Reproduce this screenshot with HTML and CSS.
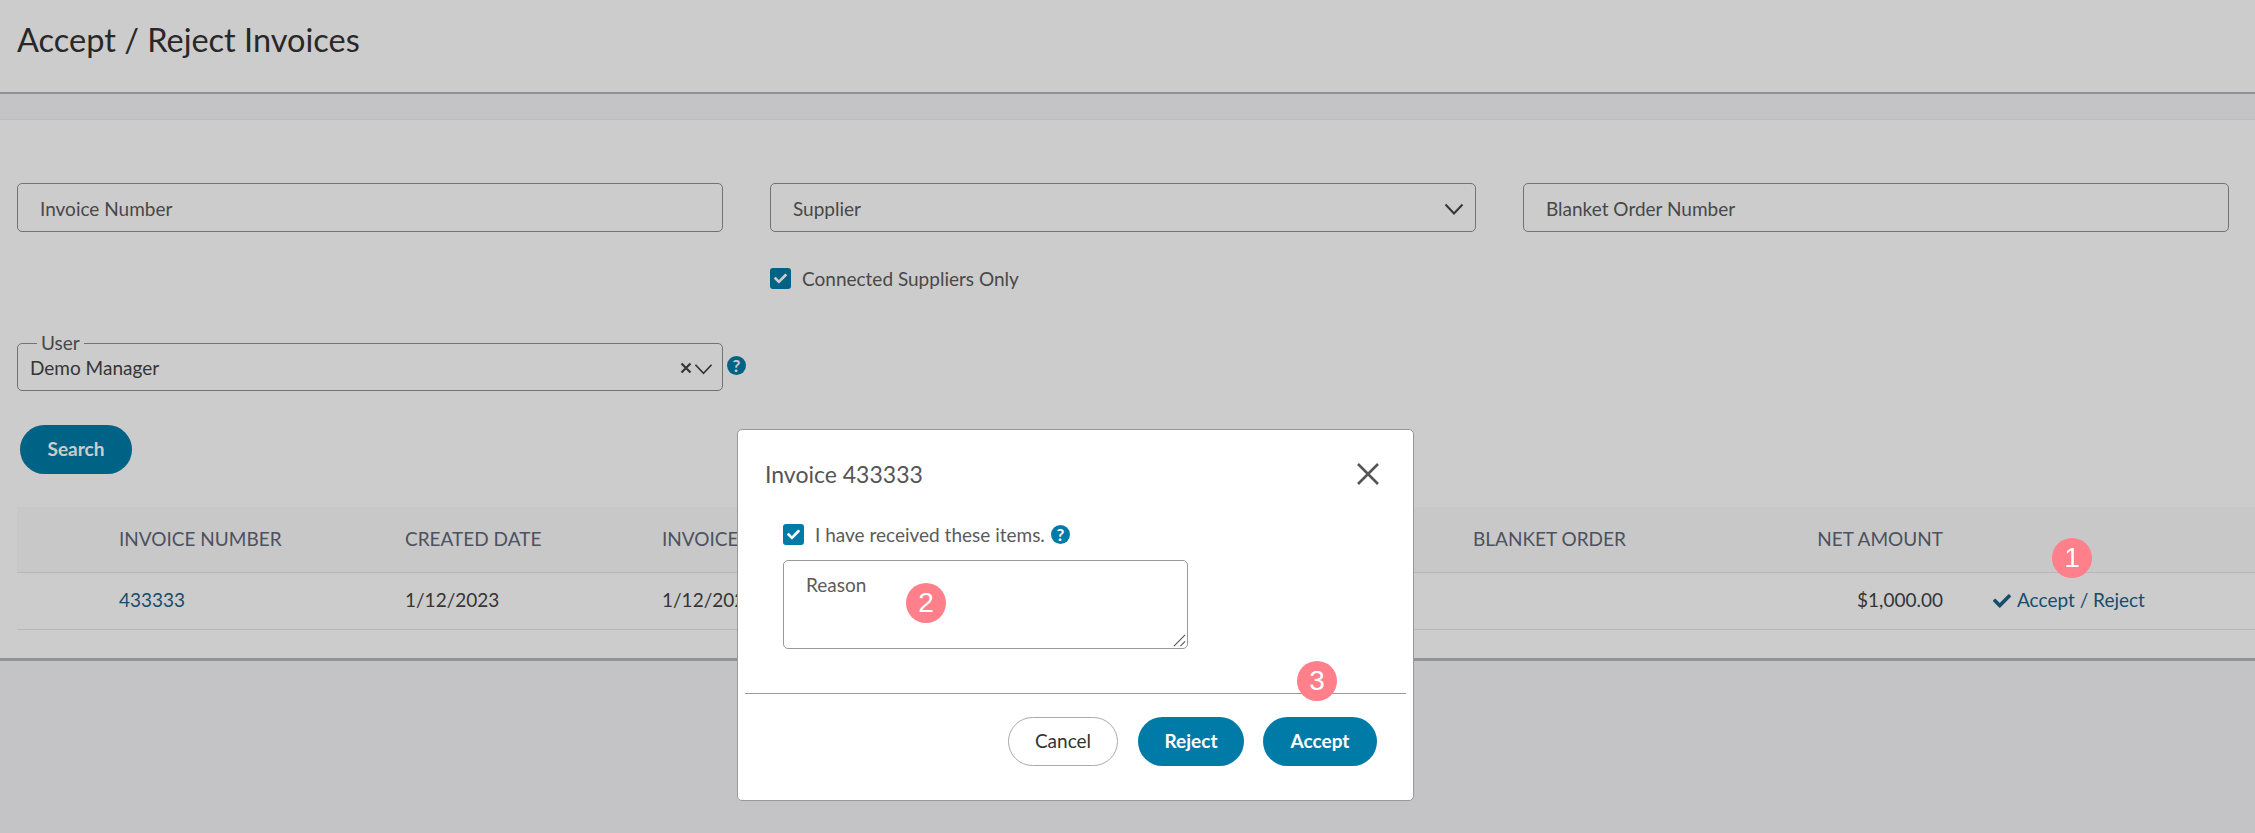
FILE: index.html
```html
<!DOCTYPE html>
<html lang="en">
<head>
<meta charset="utf-8">
<title>Accept / Reject Invoices</title>
<link rel="stylesheet" href="styles.css">
</head>
<body>
<header class="page-header"><h1>Accept / Reject Invoices</h1></header>
<div class="band"></div>
<main class="content">
  <div class="filters">
    <div class="field">Invoice Number</div>
    <div>
      <div class="field field-select">Supplier
        <svg class="chev" viewBox="0 0 20 12"><path d="M1.5 1.5 10 10.5 18.5 1.5"/></svg>
      </div>
      <label class="check-row connected">
        <span class="checkbox dark"><svg viewBox="0 0 512 512"><path d="M173.898 439.404l-166.4-166.4c-9.997-9.997-9.997-26.206 0-36.204l36.203-36.204c9.997-9.998 26.207-9.998 36.204 0L192 312.69 432.095 72.596c9.997-9.997 26.207-9.997 36.204 0l36.203 36.204c9.997 9.997 9.997 26.206 0 36.204l-294.4 294.401c-9.998 9.997-26.207 9.997-36.204-.001z"/></svg></span>
        Connected Suppliers Only
      </label>
    </div>
    <div class="field">Blanket Order Number</div>
  </div>
  <div class="user-row">
    <fieldset class="user-field">
      <legend>User</legend>
      <span class="user-value">Demo Manager</span>
      <svg class="user-x" viewBox="0 0 12 12"><path d="M1.5 1.5 10.5 10.5M10.5 1.5 1.5 10.5"/></svg>
      <svg class="user-chev" viewBox="0 0 20 12"><path d="M1.5 1.5 10 10.5 18.5 1.5"/></svg>
    </fieldset>
    <span class="help">?</span>
  </div>
  <button class="btn search" type="button">Search</button>
  <table class="grid">
    <colgroup><col class="c1"><col class="c2"><col class="c3"><col class="c4"><col class="c5"><col class="c6"><col class="c7"></colgroup>
    <thead>
      <tr><th></th><th>INVOICE NUMBER</th><th>CREATED DATE</th><th>INVOICE DATE</th><th>BLANKET ORDER</th><th class="num">NET AMOUNT</th><th></th></tr>
    </thead>
    <tbody>
      <tr><td></td><td><a class="link">433333</a></td><td>1/12/2023</td><td>1/12/2023</td><td></td><td class="num">$1,000.00</td>
      <td class="act"><a class="link"><svg class="act-check" viewBox="0 0 512 512"><path d="M173.898 439.404l-166.4-166.4c-9.997-9.997-9.997-26.206 0-36.204l36.203-36.204c9.997-9.998 26.207-9.998 36.204 0L192 312.69 432.095 72.596c9.997-9.997 26.207-9.997 36.204 0l36.203 36.204c9.997 9.997 9.997 26.206 0 36.204l-294.4 294.401c-9.998 9.997-26.207 9.997-36.204-.001z"/></svg>Accept / Reject</a></td></tr>
    </tbody>
  </table>
</main>
<div class="overlay">
  <span class="badge b1">1</span>
  <div class="modal">
    <div class="modal-head">
      <h2>Invoice 433333</h2>
      <svg class="close" viewBox="0 0 24 24"><path d="M2 2 22 22M22 2 2 22"/></svg>
    </div>
    <div class="modal-body">
      <label class="check-row received">
        <span class="checkbox"><svg viewBox="0 0 512 512"><path d="M173.898 439.404l-166.4-166.4c-9.997-9.997-9.997-26.206 0-36.204l36.203-36.204c9.997-9.998 26.207-9.998 36.204 0L192 312.69 432.095 72.596c9.997-9.997 26.207-9.997 36.204 0l36.203 36.204c9.997 9.997 9.997 26.206 0 36.204l-294.4 294.401c-9.998 9.997-26.207 9.997-36.204-.001z"/></svg></span>
        I have received these items.
        <span class="help small">?</span>
      </label>
      <div class="reason">Reason
        <svg class="grip" viewBox="0 0 14 14"><path d="M1 13 13 1M8 13 13 8"/></svg>
      </div>
      <span class="badge b2">2</span>
    </div>
    <hr class="divider">
    <span class="badge b3">3</span>
    <div class="modal-foot">
      <button class="btn ghost" type="button">Cancel</button>
      <button class="btn primary reject" type="button">Reject</button>
      <button class="btn primary accept" type="button">Accept</button>
    </div>
  </div>
</div>
</body>
</html>
```

FILE: styles.css
```css
* { box-sizing: border-box; }
html, body { height: 100%; }
body {
  margin: 0;
  background: #f5f6f9;
  font-family: "Lato", "Open Sans", sans-serif;
  font-size: 19px;
  color: #555;
  overflow: hidden;
}
.page-header {
  height: 94px;
  background: #fff;
  border-bottom: 2px solid #b4b6b8;
  padding: 20px 17px 0;
}
.page-header h1 {
  margin: 0;
  font-size: 32.5px;
  line-height: 40px;
  font-weight: 400;
  color: #333;
}
.band { height: 26px; background: #f5f6f9; border-bottom: 1px solid #ececec; }
.content {
  background: #fff;
  padding: 63px 0 28px 17px;
  border-bottom: 3px solid #b6b8ba;
}
.filters {
  display: grid;
  grid-template-columns: 706px 706px 706px;
  gap: 47px;
}
.field {
  height: 49px;
  border: 1px solid #8f8f8f;
  border-radius: 5px;
  padding: 2px 22px 0;
  display: flex;
  align-items: center;
  justify-content: space-between;
  background: #fff;
  color: #5b5b5b;
}
.chev { width: 20px; height: 12px; margin-right: -11px; fill: none; stroke: #444; stroke-width: 2; }
.check-row { display: flex; align-items: center; color: #5b5b5b; }
.connected { margin-top: 36px; height: 21px; }
.checkbox {
  width: 21px;
  height: 21px;
  border-radius: 3px;
  background: #007ba7;
  margin-right: 11px;
  display: flex;
  align-items: center;
  justify-content: center;
  flex: none;
}
.checkbox svg { width: 13px; height: 13px; fill: #fff; }
.user-row { display: flex; align-items: center; margin-top: 47px; }
.user-field {
  width: 706px;
  height: 55px;
  margin: 0;
  border: 1px solid #8f8f8f;
  border-radius: 5px;
  padding: 0 9px 5px 12px;
  display: flex;
  align-items: center;
  background: #fff;
  color: #444;
}
.user-field legend {
  padding: 0 4px;
  margin-left: 7px;
  font-size: 19px;
  line-height: 14px;
  color: #5b5b5b;
}
.user-value { flex: 1; }
.user-x { width: 12px; height: 12px; fill: none; stroke: #444; stroke-width: 2.2; margin-right: 2px; }
.user-chev { width: 19px; height: 12px; margin-top: 3px; fill: none; stroke: #444; stroke-width: 1.8; }
.help {
  width: 19px;
  height: 19px;
  margin-left: 4px;
  margin-top: 3px;
  border-radius: 50%;
  background: #007ba7;
  color: #fff;
  font: 700 17px/19px "Lato", sans-serif;
  text-align: center;
  flex: none;
}
.btn {
  font-family: inherit;
  font-size: 19px;
  font-weight: 700;
  height: 49px;
  border-radius: 25px;
  border: 0;
  padding: 0 0 3px;
  color: #fff;
  background: #007ba7;
}
.search { display: block; width: 112px; margin: 34px 0 0 3px; }
.grid {
  width: 100%;
  margin-top: 33px;
  border-collapse: collapse;
  table-layout: fixed;
}
.c1 { width: 102px; }
.c2 { width: 286px; }
.c3 { width: 257px; }
.c4 { width: 811px; }
.c5 { width: 320px; }
.c6 { width: 150px; }
.grid th {
  height: 65px;
  background: #fafafa;
  border-bottom: 1px solid #e6e6e6;
  text-align: left;
  font-weight: 400;
  color: #5f6778;
  padding: 0 0 2px;
}
.grid td {
  height: 57px;
  border-bottom: 1px solid #e6e6e6;
  color: #444;
  padding: 0 0 2px;
}
.grid .num { text-align: right; }
.grid .act { padding-left: 50px; }
.link { color: #1d5f8a; }
.act-check { width: 18px; height: 18px; margin-right: 6px; fill: #1d5f8a; vertical-align: -3px; }
.overlay { position: fixed; inset: 0; background: rgba(0, 0, 0, .2); }
.modal {
  position: absolute;
  left: 737px;
  top: 429px;
  width: 677px;
  height: 372px;
  background: #fff;
  border: 1px solid #999;
  border-radius: 5px;
  padding: 0 7px;
}
.modal-head {
  height: 88px;
  padding: 0 20px;
  display: flex;
  align-items: center;
  justify-content: space-between;
}
.modal-head h2 { margin: 0; font-size: 23px; font-weight: 400; color: #555; }
.close { width: 24px; height: 24px; fill: none; stroke: #555; stroke-width: 2.6; margin-right: 6px; }
.modal-body { position: relative; padding: 0 0 0 38px; height: 175px; }
.received { height: 22px; margin-top: 5px; }
.help.small { margin: 0 0 0 6px; }
.reason {
  position: relative;
  width: 405px;
  height: 89px;
  margin-top: 15px;
  border: 1px solid #999;
  border-radius: 5px;
  padding: 12px 22px;
  color: #5b5b5b;
}
.grip { position: absolute; right: 1px; bottom: 1px; width: 13px; height: 13px; fill: none; stroke: #555; stroke-width: 1.2; }
.divider { margin: -5px 0 0; border: 0; border-top: 1px solid #999; }
.modal-foot { display: flex; justify-content: flex-end; padding: 23px 29px 0 0; }
.ghost { width: 110px; background: #fff; border: 1px solid #aaa; color: #333; font-weight: 400; }
.reject { width: 106px; margin-left: 20px; }
.accept { width: 114px; margin-left: 19px; }
.badge {
  position: absolute;
  width: 40px;
  height: 40px;
  border-radius: 50%;
  background: #ff7f8b;
  color: #fff;
  font: 400 28px/40px "Liberation Sans", sans-serif;
  text-align: center;
}
.b1 { left: 2052px; top: 538px; }
.b2 { left: 161px; top: 60px; }
.b3 { left: 559px; top: 231px; }
```
